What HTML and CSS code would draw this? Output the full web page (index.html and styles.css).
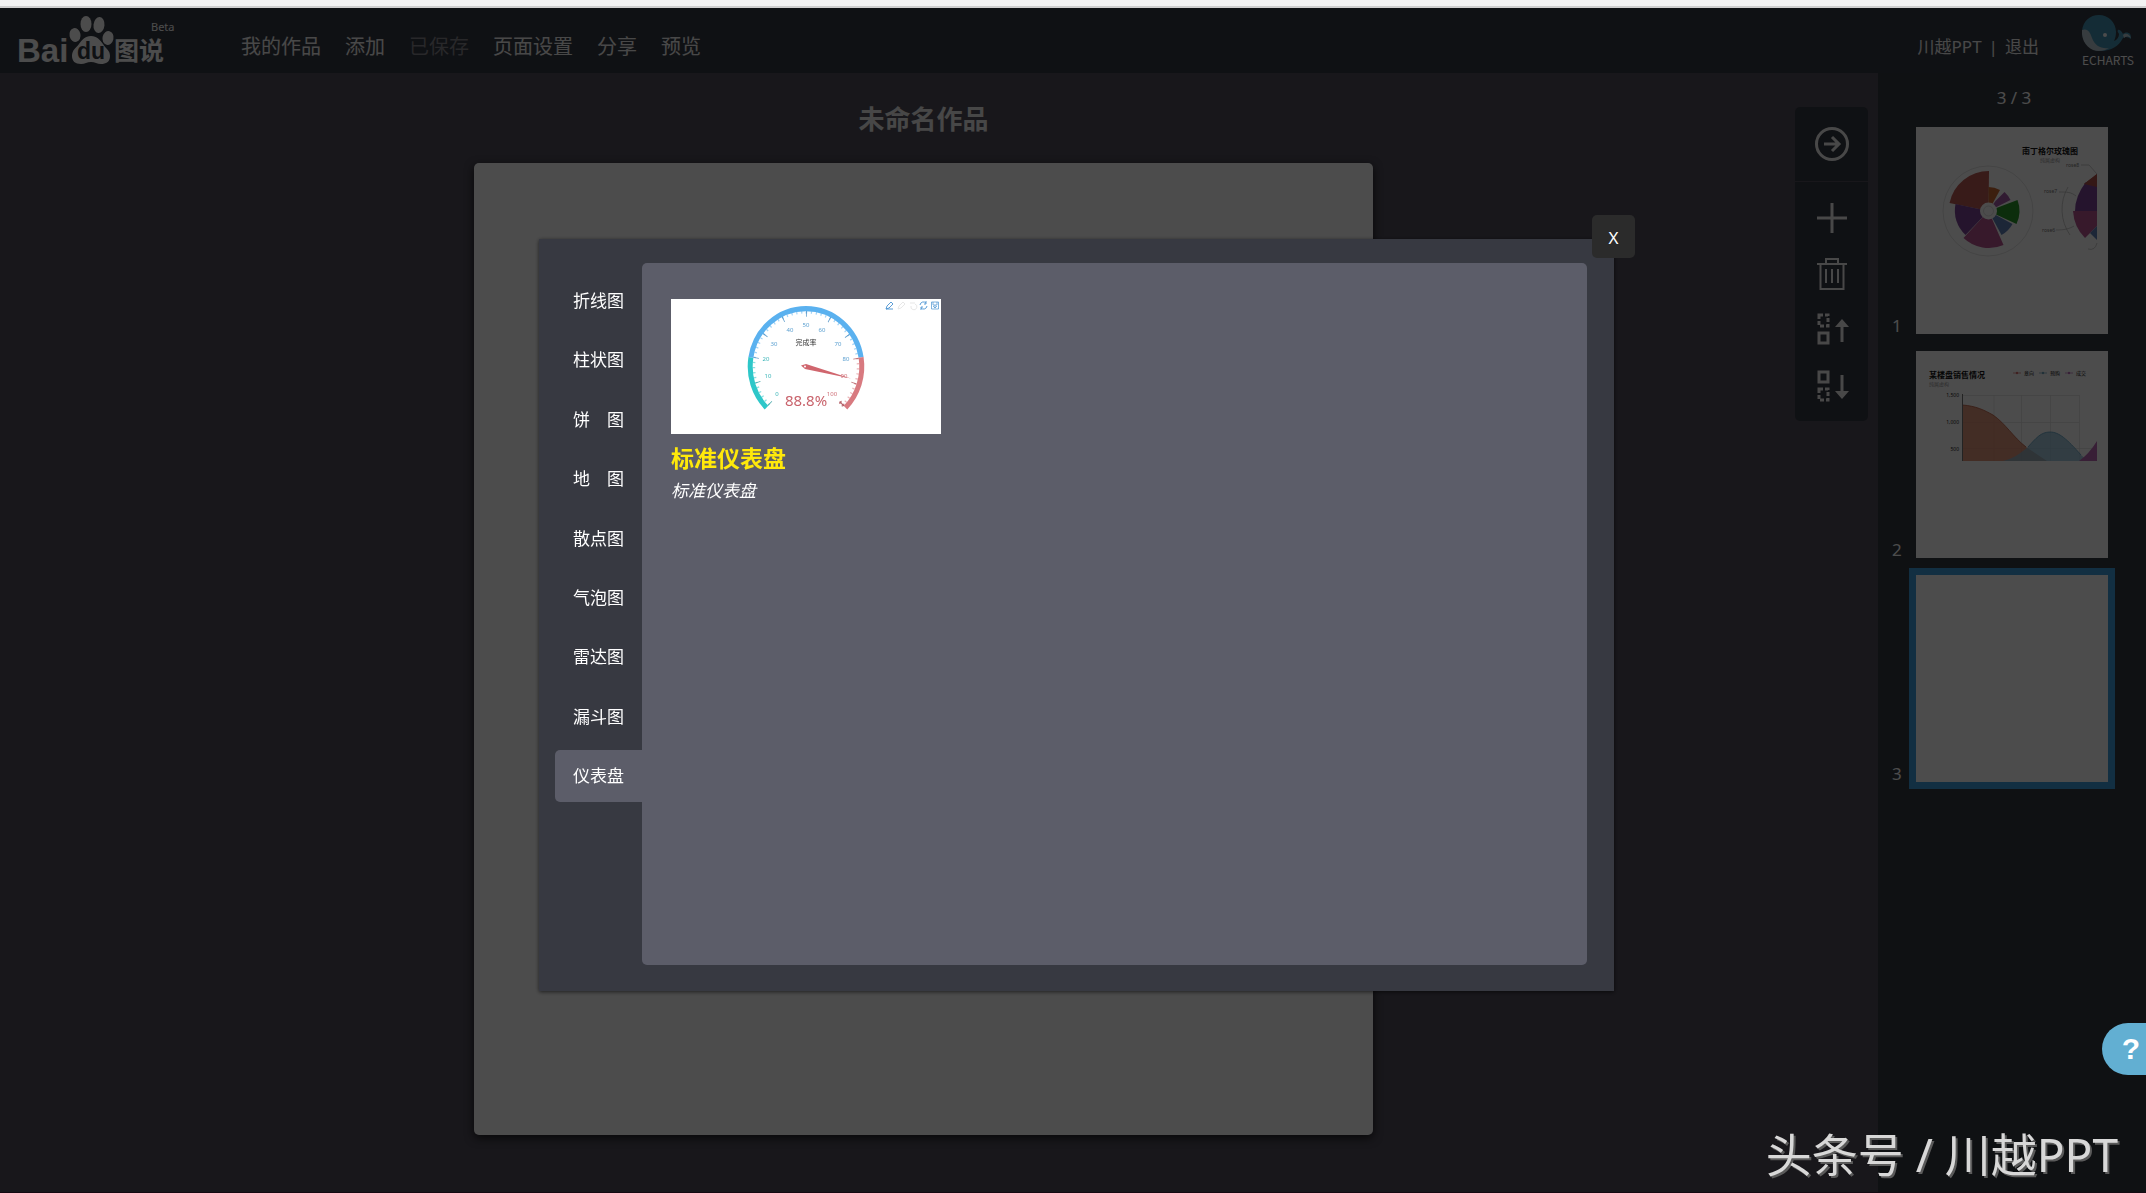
FILE: index.html
```html
<!DOCTYPE html>
<html lang="zh-CN">
<head>
<meta charset="utf-8">
<meta name="viewport" content="width=device-width, initial-scale=1">
<title>百度图说</title>
<link rel="stylesheet" href="styles.css">
</head>
<body>
<div class="browser-edge"></div>
<header class="header">
  <a class="logo" href="#" aria-label="Baidu 图说">
    <svg width="168" height="65" viewBox="0 0 168 65">
      <g fill="#fff">
        <ellipse cx="64" cy="27" rx="5.500" ry="7" transform="rotate(-12 64 27)"/>
        <ellipse cx="75" cy="16" rx="5.500" ry="8"/>
        <ellipse cx="88" cy="17" rx="5.500" ry="8" transform="rotate(6 88 17)"/>
        <ellipse cx="97" cy="30" rx="5.500" ry="7" transform="rotate(12 97 30)"/>
        <path d="M80 28c6 0 9 4 12 8 3 5 7 6 7 12 0 6-4 8-9 8-4 0-6-2-10-2s-6 2-10 2c-6 0-9-3-9-8 0-6 4-8 7-12 3-4 6-8 12-8z"/>
        <text class="logo-bai" x="6" y="54">Bai</text>
        <text class="logo-cn" x="103" y="52">图说</text>
        <text class="logo-beta" x="140" y="23">Beta</text>
      </g>
      <text class="logo-du" x="80" y="51" text-anchor="middle" fill="#353943">du</text>
    </svg>
  </a>
  <nav class="nav">
    <a href="#">我的作品</a>
    <a href="#">添加</a>
    <a href="#" class="nav-muted">已保存</a>
    <a href="#">页面设置</a>
    <a href="#">分享</a>
    <a href="#">预览</a>
  </nav>
  <div class="account">
    <a href="#">川越PPT</a><span>|</span><a href="#">退出</a>
  </div>
  <a class="echarts" href="#">
    <svg width="50" height="37" viewBox="0 0 50 37" aria-hidden="true">
      <path d="M0 16C1 6 8 0 17 0c9 0 17 7 17 17 0 4-1 7-2 9 3-1 5-4 5-7-1-2-2-3-1-4 2-1 4 2 5 4 2-2 5-2 7 0 1 1 1 3 1 5-3-2-6-3-8-1-4 8-12 13-22 13C9 36 0 28 0 16z" fill="#4595b5"/>
      <path d="M0 15c6-2 8 2 10 8 3 8 9 11 17 10-3 2-6 3-10 3C8 36-1 28 0 15z" fill="#b9c9d2"/>
      <path d="M41 20c2-2 6-2 8 3-3-2-5-2-7 0z" fill="#b9c9d2"/>
      <circle cx="23" cy="20" r="2" fill="#fff"/>
    </svg>
    <span>ECHARTS</span>
  </a>
</header>

<main class="workspace">
  <section class="stage">
    <h1 class="work-title">未命名作品</h1>
    <div class="canvas"></div>
  </section>

  <div class="toolbar">
    <button class="tool tool-first" type="button" aria-label="收起">
      <svg width="34" height="34" viewBox="0 0 34 34"><circle cx="17" cy="17" r="15.500"/><path d="M9 17h15M17 10l7 7-7 7"/></svg>
    </button>
    <button class="tool" type="button" aria-label="添加页面">
      <svg width="34" height="34" viewBox="0 0 34 34"><path d="M17 2v30M2 17h30"/></svg>
    </button>
    <button class="tool" type="button" aria-label="删除页面">
      <svg class="thin" width="34" height="34" viewBox="0 0 34 34"><path d="M2 7h30M5.500 8v24h23V8M11 7V2h12v5M11 12v14M17 12v14M23 12v14"/></svg>
    </button>
    <button class="tool" type="button" aria-label="上移页面">
      <svg width="34" height="34" viewBox="0 0 34 34"><path d="M4 20h9v10H4z"/><path d="M4 2h9v11H4z" stroke-dasharray="4 2"/><path d="M27 29V12"/><path d="M27 6l7 8H20z" class="solid"/></svg>
    </button>
    <button class="tool" type="button" aria-label="下移页面">
      <svg width="34" height="34" viewBox="0 0 34 34"><path d="M4 3h9v10H4z"/><path d="M4 20h9v11H4z" stroke-dasharray="4 2"/><path d="M27 6v17"/><path d="M27 30l7-8H20z" class="solid"/></svg>
    </button>
  </div>

  <aside class="pages">
    <p class="pages-count">3 / 3</p>
    <ol class="page-list">
      <li>
        <span>1</span>
        <a class="thumb" href="#" aria-label="第1页">
          <svg viewBox="0 0 192 207">
            <circle cx="72" cy="84" r="45" fill="none" stroke="#d0d0d0" stroke-width=".6"/>
            <g transform="translate(72.500 84)">
              <path d="M0 0L-39-8A40 40 0 0 1 .5-40z" fill="#bd5c55"/>
              <path d="M0 0L0-24A24 24 0 0 1 11.500-21z" fill="#c86a34"/>
              <path d="M0 0L7-10 16-19A25 25 0 0 1 22-11z" fill="#a55aa8"/>
              <path d="M0 0L29-11A31 31 0 0 1 28 13z" fill="#2a962a"/>
              <path d="M0 0L24 13A27 27 0 0 1 13 24z" fill="#6080b8"/>
              <path d="M0 0L15 34A37 37 0 0 1-25 27z" fill="#b85490"/>
              <path d="M0 0L-23 24A33 33 0 0 1-33-7z" fill="#7e4597"/>
              <circle r="8.500" fill="#fff"/><circle r="5" fill="none" stroke="#ccc" stroke-width=".6"/>
            </g>
            <path d="M181 47L168 57l13 10z" fill="#b0504a"/>
            <path d="M170 55Q159 69 159 84h22V58z" fill="#7e4597"/>
            <path d="M181 47L168 57l13 3z" fill="#b0504a"/>
            <path d="M157 84q1 16 12 27l12-12V84z" fill="#b85490"/>
            <path d="M181 99l-7 7 7 7z" fill="#6080b8"/>
            <path d="M165 38h8l8 9M143 65c8 0 12 0 17 4M140 103c8 0 13-1 18-4M152 60a45 45 0 0 0 2 48M172 122q7 2 9-6" fill="none" stroke="#aaa" stroke-width=".6"/>
            <text x="134" y="27" class="thumb-title" text-anchor="middle">南丁格尔玫瑰图</text>
            <text x="134" y="35" class="thumb-sub" text-anchor="middle">纯属虚构</text>
            <g class="thumb-label"><text x="150" y="40">rose8</text><text x="128" y="66">rose7</text><text x="126" y="105">rose6</text></g>
          </svg>
        </a>
      </li>
      <li>
        <span>2</span>
        <a class="thumb" href="#" aria-label="第2页">
          <svg viewBox="0 0 192 207">
            <path d="M46 44.500h117M46 71.500h117M46 97.500h135M78 44v66M105.500 44v66M134.500 44v66M163.500 44v66" stroke="#dcdcdc" stroke-width=".7" fill="none"/>
            <path d="M46.500 54C60 55 68 59 77 64 90 73 97 86 110 96l21 14H46.500z" fill="#d87c5c" fill-opacity=".8"/>
            <path d="M87 110c9-2 17-7 25-14 8-9 13-15 22-15s17 7 31 23l7 6z" fill="#82b8d4" fill-opacity=".7"/>
            <path d="M163 110q10-7 18-20v20z" fill="#bc6ab4"/>
            <path d="M46.500 54C60 55 68 59 77 64 90 73 97 86 110 96" fill="none" stroke="#b8583c" stroke-width=".8"/>
            <path d="M112 96c8-9 13-15 22-15s17 7 31 23" fill="none" stroke="#5c9ec0" stroke-width=".8"/>
            <path d="M46.500 43v67" stroke="#777"/>
            <text x="13" y="27" class="thumb-title">某楼盘销售情况</text>
            <text x="13" y="35" class="thumb-sub">纯属虚构</text>
            <g stroke-width=".8" stroke-opacity=".7"><path d="M97 22h8" stroke="#c44"/><path d="M123 22h8" stroke="#48a"/><path d="M149 22h8" stroke="#a4a"/></g>
            <g fill-opacity=".7"><circle cx="101" cy="22" r="1.200" fill="#c44"/><circle cx="127" cy="22" r="1.200" fill="#48a"/><circle cx="153" cy="22" r="1.200" fill="#a4a"/></g>
            <g class="thumb-legend"><text x="108" y="24">意向</text><text x="134" y="24">预购</text><text x="160" y="24">成交</text></g>
            <g class="thumb-legend" text-anchor="end"><text x="43" y="46">1,500</text><text x="43" y="73">1,000</text><text x="43" y="100">500</text></g>
          </svg>
        </a>
      </li>
      <li>
        <span>3</span>
        <a class="thumb thumb-current" href="#" aria-label="第3页"></a>
      </li>
    </ol>
  </aside>
</main>

<div class="overlay">
  <div class="dialog" role="dialog" aria-label="选择图表">
    <div class="tabs">
      <button class="tab" type="button">折线图</button>
      <button class="tab" type="button">柱状图</button>
      <button class="tab" type="button">饼　图</button>
      <button class="tab" type="button">地　图</button>
      <button class="tab" type="button">散点图</button>
      <button class="tab" type="button">气泡图</button>
      <button class="tab" type="button">雷达图</button>
      <button class="tab" type="button">漏斗图</button>
      <button class="tab tab-active" type="button">仪表盘</button>
    </div>
    <div class="panel">
      <a class="card" href="#">
        <svg class="card-image" viewBox="0 0 270 135">
          <g transform="translate(135 67.500) scale(1 1.040)" fill="none">
            <g stroke-width="5">
              <path d="M-39.500 39.500A55.800 55.800 0 0 1-55.100-8.700" stroke="#2ec7c9"/>
              <path d="M-55.100-8.700A55.800 55.800 0 0 1 55.100-8.700" stroke="#5ab1ef"/>
              <path d="M55.100-8.700A55.800 55.800 0 0 1 39.500 39.500" stroke="#d87a80"/>
            </g>
            <g stroke-width="2.500" stroke-dasharray=".5 1.500" stroke-opacity=".55">
              <path pathLength="20" d="M-36.800 36.800A52 52 0 0 1-51.400-8.100" stroke="#2ec7c9"/>
              <path pathLength="60" d="M-51.400-8.100A52 52 0 0 1 51.400-8.100" stroke="#5ab1ef"/>
              <path pathLength="20" d="M51.400-8.100A52 52 0 0 1 36.800 36.800" stroke="#d87a80"/>
            </g>
            <g stroke-width="5.500" stroke-dasharray=".35 9.650" stroke-opacity=".8">
              <path pathLength="20" d="M-35.700 35.700A50.500 50.500 0 0 1-49.900-7.900" stroke="#2a9a9c"/>
              <path pathLength="60" d="M-49.900-7.900A50.500 50.500 0 0 1 49.900-7.900" stroke="#3f88c0"/>
              <path pathLength="20" d="M49.900-7.900A50.500 50.500 0 0 1 35.700 35.700" stroke="#b05a62"/>
            </g>
            <path d="M34 34l4 4" stroke="#b05a62" stroke-width=".8"/>
          </g>
          <path d="M130 66.500l5-1.500 45 14.500-46-9.500z" fill="#d0666e"/>
          <circle cx="134" cy="67.500" r="1" fill="#fff"/>
          <g class="gauge-label" text-anchor="middle">
            <g fill="#3bb5b8"><text x="106" y="97">0</text><text x="97" y="79">10</text><text x="95" y="62">20</text></g>
            <g fill="#5a9fd0"><text x="103" y="47">30</text><text x="119" y="33">40</text><text x="135" y="28">50</text><text x="151" y="33">60</text><text x="167" y="47">70</text><text x="175" y="62">80</text></g>
            <g fill="#cf7078"><text x="173" y="79">90</text><text x="161" y="97">100</text></g>
          </g>
          <text class="gauge-name" x="135" y="46" text-anchor="middle">完成率</text>
          <text class="gauge-value" x="135" y="107" text-anchor="middle">88.8%</text>
          <g fill="none" stroke="#4b93d1" stroke-width=".9">
            <path d="M215 10l1-3 4-4 2 2-4 4zM215 10h7"/>
            <path d="M227 10l1-3 4-4 2 2-4 4z" stroke="#e4e4e4"/>
            <path d="M239 4h5M240 7a3 3 0 1 0 4-2" stroke="#e4e4e4"/>
            <path d="M249 6a3.500 3.500 0 0 1 6-2M256 7a3.500 3.500 0 0 1-6 2M255 2v3h-2M250 11V8h2"/>
            <path d="M260.500 3h7v7h-7zM262 3v3h4V3M264 6v3M262 7l2 2 2-2" stroke-width=".7"/>
          </g>
        </svg>
        <strong class="card-title">标准仪表盘</strong>
        <em class="card-text">标准仪表盘</em>
      </a>
    </div>
    <button class="close" type="button" aria-label="关闭">X</button>
  </div>
</div>

<button class="help" type="button" aria-label="帮助">?</button>
<div class="watermark">头条号 / 川越PPT</div>
</body>
</html>
```

FILE: styles.css
```css
* {
  box-sizing: border-box;
}

body {
  margin: 0;
  min-height: 100vh;
  display: flex;
  flex-direction: column;
  background: #504d5a;
  color: #fff;
  font-family: "Noto Sans", "Noto Sans CJK SC", sans-serif;
  font-size: 17px;
  line-height: 24px;
}

a {
  color: inherit;
  text-decoration: none;
}

button {
  border: 0;
  padding: 0;
  font: inherit;
  color: inherit;
  cursor: pointer;
}

svg {
  display: block;
}

.browser-edge {
  height: 8px;
  flex: none;
  background: #f2f2f2;
  border-bottom: 2px solid #cfcfcf;
}

/* Header */
.header {
  height: 65px;
  flex: none;
  display: flex;
  align-items: center;
  padding: 0 12px 0 11px;
  background: #353943;
}

.logo-bai {
  font: bold 33px "Liberation Sans", sans-serif;
}

.logo-du {
  font: bold 23px "Liberation Sans", sans-serif;
}

.logo-cn {
  font: bold 25px "Noto Sans CJK SC", sans-serif;
}

.logo-beta {
  font-size: 11px;
}

.nav {
  display: flex;
  gap: 24px;
  margin-left: 62px;
  padding-top: 12px;
  font-size: 20px;
  color: #f2f2f2;
}

.nav-muted {
  color: #85858c;
}

.account {
  display: flex;
  gap: 7px;
  margin-left: auto;
  padding-top: 12px;
  color: #f2f2f2;
}

.echarts {
  display: flex;
  flex-direction: column;
  margin-left: 43px;
  padding-top: 2px;
  font: 12px/16px "Noto Sans CJK SC", sans-serif;
}

/* Workspace */
.workspace {
  flex: 1;
  display: flex;
  align-items: stretch;
  border-bottom: 1px solid #40203a;
}

.stage {
  flex: 1;
  display: flex;
  flex-direction: column;
  align-items: center;
  padding: 27px 0 57px 52px;
}

.work-title {
  margin: 0 0 25px;
  font-size: 26px;
  line-height: 38px;
  color: #eee;
}

.canvas {
  width: 100%;
  max-width: 899px;
  aspect-ratio: 899 / 972;
  background: #fff;
  border-radius: 5px;
  box-shadow: 0 3px 10px rgba(0, 0, 0, .7);
}

.toolbar {
  align-self: flex-start;
  width: 73px;
  margin: 34px 10px 0 0;
  padding-bottom: 7px;
  background: #353943;
  border-radius: 5px;
}

.tool {
  display: flex;
  align-items: center;
  justify-content: center;
  width: 100%;
  height: 56px;
  background: none;
}

.tool-first {
  height: 75px;
  margin-bottom: 8px;
  border-bottom: 1px solid #504d5a;
}

.tool svg {
  fill: none;
  stroke: #f2f2f2;
  stroke-width: 3;
}

.tool .thin {
  stroke-width: 2;
}

.tool .solid {
  fill: #f2f2f2;
  stroke: none;
}

/* Page list */
.pages {
  width: 268px;
  padding: 13px 14px;
  background: #353a40;
}

.pages-count {
  margin: 0 0 17px;
  padding-left: 4px;
  text-align: center;
}

.page-list {
  list-style: none;
  margin: 0;
  padding: 0;
}

.page-list li {
  display: flex;
  align-items: flex-end;
  margin-bottom: 17px;
}

.page-list span {
  width: 24px;
  line-height: 16px;
}

.thumb {
  width: 192px;
  height: 207px;
  background: #fff;
}

.thumb-current {
  box-shadow: 0 0 0 7px #3c9fdc;
}

.thumb-title {
  font-size: 8px;
  font-weight: bold;
  fill: #111;
}

.thumb-sub {
  font-size: 5px;
  fill: #999;
}

.thumb-label {
  font-size: 5px;
  fill: #777;
}

.thumb-legend {
  font-size: 5px;
  fill: #222;
}

/* Chart picker dialog */
.overlay {
  position: fixed;
  inset: 8px 0 0;
  display: flex;
  justify-content: center;
  align-items: flex-start;
  padding: 231px 0 0 7px;
  background: rgba(0, 0, 0, .7);
}

.dialog {
  position: relative;
  display: flex;
  width: 1075px;
  max-width: 90%;
  padding: 24px 27px 26px 16px;
  background: #373941;
  box-shadow: 0 1px 4px rgba(0, 0, 0, .6);
}

.tabs {
  display: flex;
  flex-direction: column;
  justify-content: space-between;
  width: 87px;
  height: 527px;
  margin-top: 12px;
}

.tab {
  height: 52px;
  padding-left: 18px;
  background: none;
  border-radius: 5px 0 0 5px;
  text-align: left;
}

.tab-active {
  background: #5c5d69;
}

.panel {
  flex: 1;
  min-height: 702px;
  padding: 36px 29px;
  background: #5c5d69;
  border-radius: 5px;
}

.card {
  display: block;
  width: 270px;
}

.card-image {
  width: 270px;
  height: 135px;
  background: #fff;
}

.card-title {
  display: block;
  margin-top: 8px;
  font-size: 23px;
  line-height: 32px;
  color: #ffe90a;
}

.card-text {
  display: block;
  margin-top: 4px;
  line-height: 26px;
}

.gauge-label {
  font-size: 6px;
}

.gauge-name {
  font-size: 7px;
  fill: #333;
}

.gauge-value {
  font-size: 15px;
  fill: #c9636c;
}

.close {
  position: absolute;
  top: -24px;
  right: -21px;
  width: 43px;
  height: 43px;
  padding-top: 2px;
  background: #2b2b2b;
  border-radius: 5px;
}

/* Floating items */
.help {
  position: fixed;
  right: 0;
  bottom: 118px;
  width: 44px;
  height: 52px;
  padding-left: 14px;
  border-radius: 26px 0 0 26px;
  background: #62afd2;
  font: bold 30px "Liberation Sans", sans-serif;
}

.watermark {
  position: fixed;
  right: 28px;
  bottom: 9px;
  font-size: 46px;
  line-height: 60px;
  color: #d8d8d8;
  text-shadow: 2px 2px 0 #5a5a5a;
}
```
